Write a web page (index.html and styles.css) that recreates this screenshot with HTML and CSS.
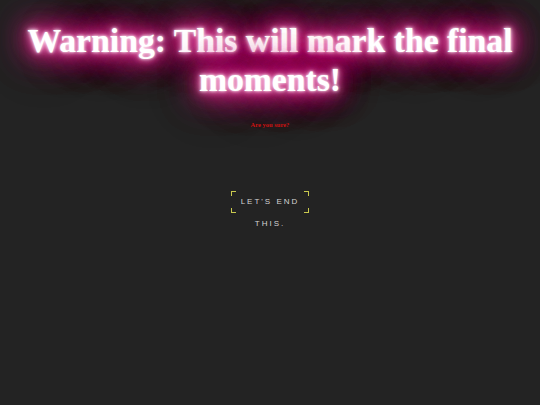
FILE: index.html
```
<!DOCTYPE html>
<html>
<head>
<meta charset="utf-8">
<link rel="stylesheet" href="styles.css">
</head>
<body>
<main class="page">
  <h1 class="warning">Warning: This will mark the final moments!</h1>
  <p class="question">Are you sure?</p>
  <div class="end-btn">Let's end this.</div>
</main>
</body>
</html>
```
FILE: styles.css
```
html, body {
  margin: 0;
  padding: 0;
  background: #232323;
}
.page {
  display: flex;
  flex-direction: column;
  align-items: center;
  padding-top: 22px;
}
.warning {
  margin: 0;
  font-family: "Liberation Serif", "Times New Roman", serif;
  font-weight: bold;
  font-size: 33.7px;
  line-height: 38.5px;
  text-align: center;
  color: #fff;
  text-shadow: 0 0 3px #fff, 0 0 6px #ffd6ec, 0 0 12px #ff4fae, 0 0 20px #f0288f, 0 0 30px #e0208a, 0 0 30px #e0208a, 0 0 42px #c01878, 0 0 42px #c01878, 0 0 70px rgba(0, 0, 0, 0.45);
}
.question {
  margin: 22px 0 0;
  font-family: "Liberation Serif", "Times New Roman", serif;
  font-weight: bold;
  font-size: 6.5px;
  line-height: 8px;
  color: #cc1111;
}
.end-btn {
  margin-top: 62px;
  width: 78px;
  font-family: "Liberation Sans", Arial, sans-serif;
  font-size: 8px;
  letter-spacing: 2px;
  line-height: 22px;
  text-transform: uppercase;
  text-align: center;
  color: #d4d4d4;
  --c: #c9c94e;
  background:
    linear-gradient(var(--c), var(--c)) 0 0 / 5px 1px no-repeat,
    linear-gradient(var(--c), var(--c)) 0 0 / 1px 5px no-repeat,
    linear-gradient(var(--c), var(--c)) 100% 0 / 5px 1px no-repeat,
    linear-gradient(var(--c), var(--c)) 100% 0 / 1px 5px no-repeat,
    linear-gradient(var(--c), var(--c)) 0 21px / 5px 1px no-repeat,
    linear-gradient(var(--c), var(--c)) 0 17px / 1px 5px no-repeat,
    linear-gradient(var(--c), var(--c)) 100% 21px / 5px 1px no-repeat,
    linear-gradient(var(--c), var(--c)) 100% 17px / 1px 5px no-repeat;
}
```
